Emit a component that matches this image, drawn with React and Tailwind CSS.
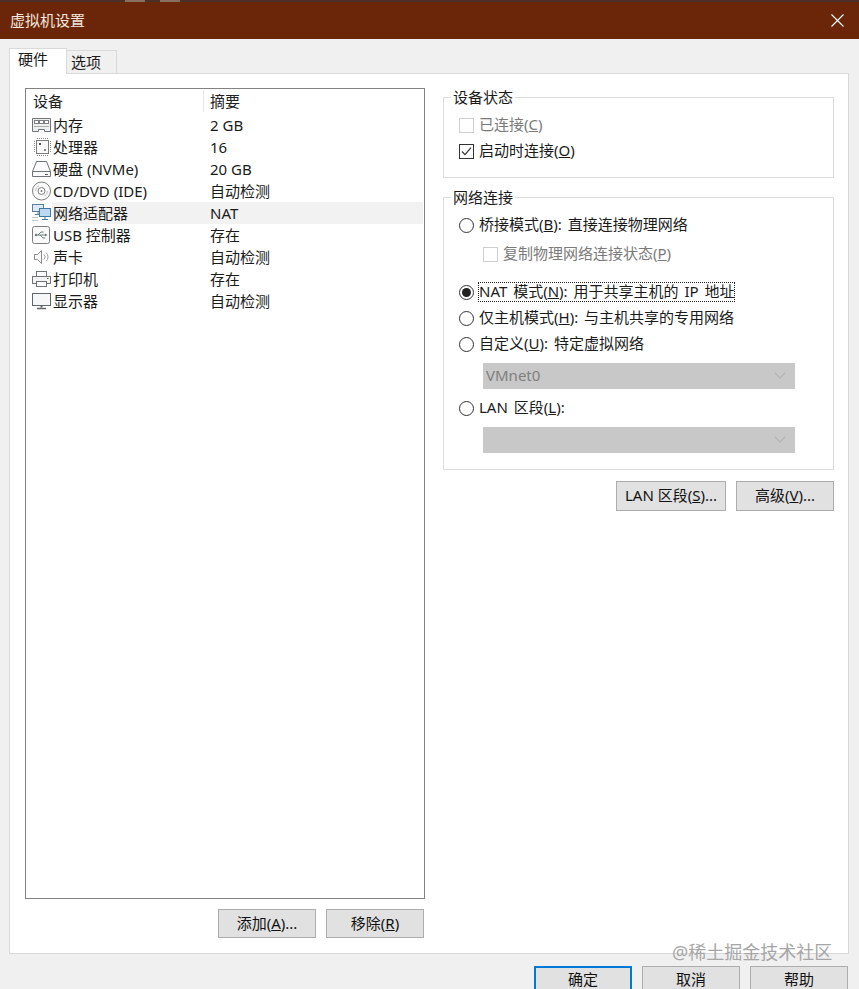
const S = ({ children }) => (
  <svg width="21" height="20" viewBox="0 0 21 20" fill="none" stroke="#6f7478" strokeWidth="1" className="shrink-0">
    {children}
  </svg>
);

const MemoryIcon = () => (
  <S>
    <path d="M1.5 4.5h18v13h-6v-2h-6v2h-6z" transform="translate(0 -1)" fill="#eef0ef" />
    <rect x="3.5" y="5.5" width="4" height="3" fill="#fff" stroke="#7b8083" />
    <rect x="8.5" y="5.5" width="4" height="3" fill="#fff" stroke="#7b8083" />
    <rect x="13.5" y="5.5" width="4" height="3" fill="#fff" stroke="#7b8083" />
    <path d="M3 11.5h15" stroke="#a9adaf" />
  </S>
);
const CpuIcon = () => (
  <S>
    <rect x="5.5" y="3.5" width="12" height="13" fill="#fafafa" stroke="#7d7d7d" />
    <path d="M6 1.5h12M6 18.5h12M3.5 4v12M19.5 4v12" stroke="#8a8a8a" strokeDasharray="1 1" />
    <rect x="8" y="6" width="2" height="2" fill="#555" stroke="none" />
    <rect x="13" y="12" width="2" height="2" fill="#888" stroke="none" />
  </S>
);
const DiskIcon = () => (
  <S>
    <path d="M5.5 2.5h10l4 10v5h-18v-5z" fill="#fcfcfc" />
    <path d="M1.5 12.5h18" />
    <path d="M14 15.5h3" stroke="#555" />
  </S>
);
const CdIcon = () => (
  <S>
    <circle cx="10.5" cy="10" r="9" fill="#fafafa" stroke="#7d7d7d" />
    <circle cx="10.5" cy="10" r="3.5" fill="#fff" stroke="#7d7d7d" />
    <circle cx="10.5" cy="10" r="1" fill="#777" stroke="none" />
    <path d="M4.5 10a6 6 0 0 1 3.5-5.4M16.5 10a6 6 0 0 1-3.5 5.4" stroke="#c0c0c0" />
  </S>
);
const NetIcon = () => (
  <S>
    <rect x="1.5" y="1.5" width="11" height="7" fill="#dde9f3" stroke="#5d7f9b" />
    <path d="M7 8.5v2.5M4 11.5h4" stroke="#5d7f9b" />
    <rect x="8.5" y="5.5" width="11" height="8" fill="#bcd8ee" stroke="#3f7aa6" />
    <path d="M14 13.5v3M11 16.5h6" stroke="#3f7aa6" />
    <path d="M1.5 14.5h6M1.5 17.5h6" stroke="#8f8f8f" strokeDasharray="1 1" />
  </S>
);
const UsbIcon = () => (
  <S>
    <rect x="1.5" y="1.5" width="17" height="17" rx="2" fill="#fafafa" stroke="#7d7d7d" />
    <path d="M4.5 10h10M7 10l3-3h2.5M9 10l3 3h2" stroke="#6c7a7a" />
    <circle cx="5" cy="10" r="1.2" fill="#6c7a7a" stroke="none" />
    <path d="M14 8.5l2.5 1.5-2.5 1.5z" fill="#6c7a7a" stroke="none" />
  </S>
);
const SoundIcon = () => (
  <S>
    <path d="M3.5 7.5h3l4-4v13l-4-4h-3z" fill="#f8f8f8" stroke="#8a8a8a" />
    <path d="M13 7.5a3.5 3.5 0 0 1 0 5M15 5.5a6 6 0 0 1 0 9" stroke="#a0a0a0" />
  </S>
);
const PrinterIcon = () => (
  <S>
    <rect x="5.5" y="2.5" width="10" height="5" fill="#fff" />
    <rect x="1.5" y="7.5" width="18" height="7" fill="#f4f4f4" />
    <rect x="5.5" y="12.5" width="10" height="5" fill="#fff" />
    <path d="M16 9.5h1.5" stroke="#555" />
  </S>
);
const MonitorIcon = () => (
  <S>
    <rect x="1.5" y="2.5" width="18" height="12" fill="#f7f7f7" stroke="#60676c" />
    <path d="M10.5 14.5v2" stroke="#60676c" strokeWidth="2" />
    <path d="M6 17.5h9" stroke="#60676c" strokeWidth="1.5" />
  </S>
);

const rows = [
  [MemoryIcon, "内存", "2 GB"],
  [CpuIcon, "处理器", "16"],
  [DiskIcon, "硬盘 (NVMe)", "20 GB"],
  [CdIcon, "CD/DVD (IDE)", "自动检测"],
  [NetIcon, "网络适配器", "NAT", true],
  [UsbIcon, "USB 控制器", "存在"],
  [SoundIcon, "声卡", "自动检测"],
  [PrinterIcon, "打印机", "存在"],
  [MonitorIcon, "显示器", "自动检测"],
];

const Btn = ({ children, className = "", primary }) => (
  <button
    className={
      "flex items-center justify-center bg-[#e1e1e1] text-[#111] " +
      (primary ? "border-2 border-[#0078d7] " : "border border-[#adadad] ") +
      className
    }
  >
    {children}
  </button>
);

const Radio = ({ on }) => (
  <span className="w-[15px] h-[15px] shrink-0 rounded-full bg-white border border-[#333] flex items-center justify-center">
    {on && <span className="w-[9px] h-[9px] rounded-full bg-[#222]" />}
  </span>
);

const Check = ({ on, disabled }) => (
  <span className={"w-[15px] h-[15px] shrink-0 bg-white border flex items-center justify-center " + (disabled ? "border-[#cfcfcf]" : "border-[#333]")}>
    {on && (
      <svg width="13" height="13" viewBox="0 0 13 13" fill="none" stroke="#333" strokeWidth="1.2">
        <path d="M2 6.5l3 3.2 6-7" />
      </svg>
    )}
  </span>
);

const Select = ({ text }) => (
  <div className="ml-[40px] w-[312px] h-[26px] bg-[#c8c8c8] flex items-center justify-between pl-[3px] pr-[9px] text-[#7f7f7f]">
    <span className="pb-[2px]">{text}</span>
    <svg width="12" height="8" viewBox="0 0 12 8" fill="none" stroke="#b4b4b4" strokeWidth="1.2">
      <path d="M1 1l5 5 5-5" />
    </svg>
  </div>
);

const Group = ({ title, className, children }) => (
  <div className={"border border-[#dcdcdc] pl-[15px] " + className}>
    <div className="w-fit bg-white -mt-[11px] -ml-[8px] px-[2px] h-[20px] leading-[20px]">{title}</div>
    {children}
  </div>
);

export default function App() {
  return (
    <div
      className="relative w-[859px] h-[989px] overflow-hidden bg-[#f0f0f0] text-[15px] text-[#1a1a1a] leading-[22px] flex flex-col"
      style={{ fontFamily: '"Noto Sans","Noto Sans CJK SC",sans-serif' }}
    >
      <div className="h-[39px] shrink-0 bg-[#6b2609] flex flex-col text-[#f3e6df]">
        <div className="h-[2px] shrink-0 bg-[#4a3028] flex pl-[125px] gap-[15px]">
          <div className="w-[20px] bg-[#86705f]" />
          <div className="w-[20px] bg-[#86705f]" />
        </div>
        <div className="flex-1 flex items-center justify-between pl-[10px] pr-[15px]">
          <span className="pb-[2px]">虚拟机设置</span>
          <svg width="13" height="13" viewBox="0 0 13 13" stroke="#fff" strokeWidth="1.1">
            <path d="M0.5 0.5l12 12M12.5 0.5l-12 12" />
          </svg>
        </div>
      </div>

      <div className="flex items-end pl-[9px] h-[34px] shrink-0 relative z-10">
        <div className="w-[58px] h-[26px] -mb-px bg-white border border-b-0 border-[#d9d9d9] pl-[8px] leading-[21px]">硬件</div>
        <div className="w-[50px] h-[23px] bg-[#f0f0f0] border border-l-0 border-b-0 border-[#d9d9d9] pl-[4px] leading-[22px]">选项</div>
      </div>

      <div className="ml-[9px] w-[840px] h-[881px] shrink-0 bg-white border border-[#d9d9d9] flex pl-[15px] pt-[14px]">
        <div className="w-[400px] flex flex-col">
          <div className="h-[811px] border border-[#828282] px-px pt-px">
            <div className="flex h-[24px] pl-[6px] text-[#222] leading-[22px]">
              <div className="w-[171px] h-[22px] border-r border-[#e5e5e5]">设备</div>
              <div className="pl-[6px]">摘要</div>
            </div>
            {rows.map(([Icon, name, val, sel]) => (
              <div key={name} className="flex items-center h-[22px] pl-[4px]">
                <Icon />
                <div className={"flex h-[22px] flex-1 items-center pb-[1px] " + (sel ? "bg-[#f2f2f2]" : "")}>
                  <div className="w-[158px] pl-[1px] whitespace-nowrap">{name}</div>
                  <div>{val}</div>
                </div>
              </div>
            ))}
          </div>
          <div className="flex justify-end gap-[10px] mt-[10px] pr-px">
            <Btn className="w-[98px] h-[29px] pb-[2px]">添加(<u>A</u>)...</Btn>
            <Btn className="w-[98px] h-[29px] pb-[2px]">移除(<u>R</u>)</Btn>
          </div>
        </div>

        <div className="ml-[18px] w-[391px] mt-[9px] flex flex-col [word-spacing:2px]">
          <Group title="设备状态" className="h-[81px]">
            <div className="flex items-center gap-[5px] h-[26px] mt-[5px] text-[#7a7a7a]">
              <Check disabled />
              <span className="pb-[2px]">已连接(<u>C</u>)</span>
            </div>
            <div className="flex items-center gap-[5px] h-[26px]">
              <Check on />
              <span className="pb-[2px]">启动时连接(<u>O</u>)</span>
            </div>
          </Group>

          <Group title="网络连接" className="h-[273px] mt-[19px]">
            <div className="flex items-center gap-[5px] h-[26px] mt-[5px]">
              <Radio />
              <span className="pb-[2px]">桥接模式(<u>B</u>): 直接连接物理网络</span>
            </div>
            <div className="flex items-center gap-[5px] h-[26px] ml-[24px] mt-[3px] text-[#7a7a7a]">
              <Check disabled />
              <span className="pb-[2px]">复制物理网络连接状态(<u>P</u>)</span>
            </div>
            <div className="flex items-center gap-[5px] h-[26px] mt-[12px]">
              <Radio on />
              <span className="outline-1 outline-dotted outline-[#222] h-[18px] leading-[16px] whitespace-nowrap">NAT 模式(<u>N</u>): 用于共享主机的 IP 地址</span>
            </div>
            <div className="flex items-center gap-[5px] h-[26px]">
              <Radio />
              <span className="pb-[2px]">仅主机模式(<u>H</u>): 与主机共享的专用网络</span>
            </div>
            <div className="flex items-center gap-[5px] h-[26px]">
              <Radio />
              <span className="pb-[2px]">自定义(<u>U</u>): 特定虚拟网络</span>
            </div>
            <div className="-ml-[16px] mt-[6px]"><Select text="VMnet0" /></div>
            <div className="flex items-center gap-[5px] h-[26px] mt-[6px]">
              <Radio />
              <span className="pb-[2px]">LAN 区段(<u>L</u>):</span>
            </div>
            <div className="-ml-[16px] mt-[6px]"><Select text="" /></div>
          </Group>

          <div className="flex justify-end gap-[10px] mt-[11px]">
            <Btn className="w-[110px] h-[30px] pb-[3px]">LAN 区段(<u>S</u>)...</Btn>
            <Btn className="w-[98px] h-[30px] pb-[3px]">高级(<u>V</u>)...</Btn>
          </div>
        </div>
      </div>

      <div className="flex justify-end gap-[10px] pr-[11px] mt-[12px]">
        <Btn primary className="w-[98px] h-[30px] pb-[4px] leading-[16px]">确定</Btn>
        <Btn className="w-[98px] h-[30px] pb-[4px] leading-[16px]">取消</Btn>
        <Btn className="w-[98px] h-[30px] pb-[4px] leading-[16px]">帮助</Btn>
      </div>

      <div className="absolute left-[672px] top-[940px] text-[18px] leading-[24px] text-[#a6a6a6] whitespace-nowrap">@稀土掘金技术社区</div>
    </div>
  );
}
